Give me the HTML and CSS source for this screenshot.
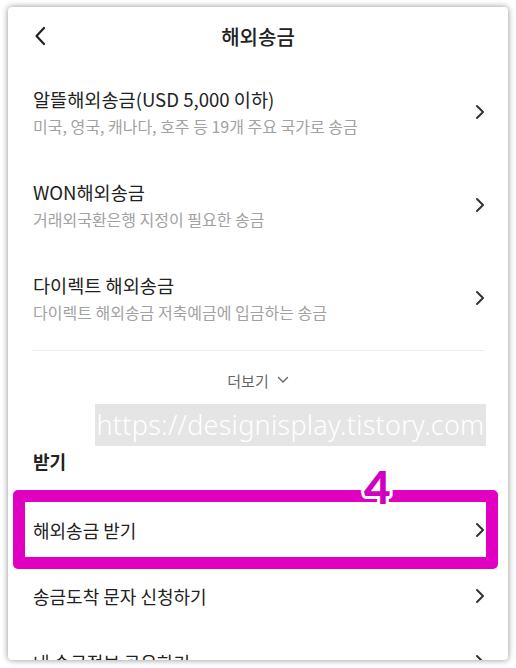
FILE: index.html
```html
<!DOCTYPE html>
<html>
<head>
  <title>해외송금</title>
  <link rel="stylesheet" href="styles.css">
</head>
<body>

  <div class="card">

    <!-- Header -->
    <div class="header">
      <svg class="back" width="12" height="20" viewBox="0 0 12 20">
        <path d="M10 2 L2.5 10 L10 18" fill="none" stroke="#222" stroke-width="2.2" stroke-linecap="round" stroke-linejoin="round"/>
      </svg>
      <h1>해외송금</h1>
    </div>

    <!-- Send list -->
    <div class="row tall">
      <div class="text">
        <div class="title">알뜰해외송금(USD 5,000 이하)</div>
        <div class="sub">미국, 영국, 캐나다, 호주 등 19개 주요 국가로 송금</div>
      </div>
      <svg class="chev" width="10" height="16" viewBox="0 0 10 16"><path d="M2 2 L8 8 L2 14"/></svg>
    </div>

    <div class="row tall">
      <div class="text">
        <div class="title">WON해외송금</div>
        <div class="sub">거래외국환은행 지정이 필요한 송금</div>
      </div>
      <svg class="chev" width="10" height="16" viewBox="0 0 10 16"><path d="M2 2 L8 8 L2 14"/></svg>
    </div>

    <div class="row tall">
      <div class="text">
        <div class="title">다이렉트 해외송금</div>
        <div class="sub">다이렉트 해외송금 저축예금에 입금하는 송금</div>
      </div>
      <svg class="chev" width="10" height="16" viewBox="0 0 10 16"><path d="M2 2 L8 8 L2 14"/></svg>
    </div>

    <div class="divider"></div>

    <div class="more">
      더보기
      <svg width="12" height="8" viewBox="0 0 12 8"><path d="M1.5 1.5 L6 6 L10.5 1.5" fill="none" stroke="#666" stroke-width="1.4" stroke-linecap="round" stroke-linejoin="round"/></svg>
    </div>

    <!-- Receive list -->
    <h2 class="section">받기</h2>

    <div class="row">
      <div class="title">해외송금 받기</div>
      <svg class="chev" width="10" height="16" viewBox="0 0 10 16"><path d="M2 2 L8 8 L2 14"/></svg>
    </div>

    <div class="row">
      <div class="title">송금도착 문자 신청하기</div>
      <svg class="chev" width="10" height="16" viewBox="0 0 10 16"><path d="M2 2 L8 8 L2 14"/></svg>
    </div>

    <div class="row">
      <div class="title">내 송금정보 공유하기</div>
      <svg class="chev" width="10" height="16" viewBox="0 0 10 16"><path d="M2 2 L8 8 L2 14"/></svg>
    </div>

    <!-- overlays -->
    <div class="watermark">https://designisplay.tistory.com</div>
    <div class="highlight"></div>
    <div class="step">4</div>

  </div>

</body>
</html>
```

FILE: styles.css
```css
body {
  margin: 0;
  background: #fff;
  font-family: "Noto Sans CJK KR", "Noto Sans", sans-serif;
  color: #222;
}

.card {
  position: relative;
  margin: 7px 8px;
  width: 500px;
  height: 653px;
  overflow: hidden;
  background: #fff;
  border-radius: 4px;
  box-shadow: 0 0 6px rgba(0, 0, 0, 0.45);
}

.header {
  position: relative;
  height: 58px;
  display: flex;
  align-items: center;
  justify-content: center;
}

.header h1 {
  margin: 0;
  font-size: 20px;
  font-weight: 500;
  color: #222;
}

.back {
  position: absolute;
  left: 26px;
  top: 19px;
}

.row {
  height: 66px;
  padding: 0 23px 0 25px;
  display: flex;
  align-items: center;
  justify-content: space-between;
}

.row.tall {
  height: 93px;
}

.title {
  font-size: 18px;
  line-height: 26px;
  color: #222;
}

.tall .title {
  font-size: 18.6px;
}

.sub {
  margin-top: 3px;
  font-size: 16px;
  line-height: 22px;
  color: #a2a2a2;
}

.chev path {
  fill: none;
  stroke: #333;
  stroke-width: 2;
  stroke-linecap: round;
  stroke-linejoin: round;
}

.divider {
  margin: 6px 24px 0;
  height: 1px;
  background: #ececec;
}

.more {
  height: 58px;
  display: flex;
  align-items: center;
  justify-content: center;
  gap: 8px;
  font-size: 15px;
  color: #666;
}

.section {
  margin: 0;
  padding: 39px 25px 23px;
  font-size: 18px;
  line-height: 26px;
  font-weight: 700;
  color: #222;
}

.watermark {
  position: absolute;
  left: 87px;
  top: 397px;
  width: 391px;
  height: 42px;
  background: rgba(222, 222, 222, 0.8);
  color: #fff;
  font-family: "Noto Sans", sans-serif;
  font-size: 27px;
  letter-spacing: 0.25px;
  line-height: 42px;
  font-weight: 300;
  text-align: center;
  white-space: nowrap;
}

.highlight {
  position: absolute;
  left: 5px;
  top: 483px;
  width: 485px;
  height: 79px;
  box-sizing: border-box;
  border: 12px solid #e100c2;
  border-radius: 5px;
}

.step {
  position: absolute;
  left: 356px;
  top: 455px;
  font-family: "Lato", sans-serif;
  font-size: 46px;
  font-weight: 900;
  line-height: 50px;
  color: #d000c0;
  -webkit-text-stroke: 6px #fff;
  paint-order: stroke fill;
}
```
